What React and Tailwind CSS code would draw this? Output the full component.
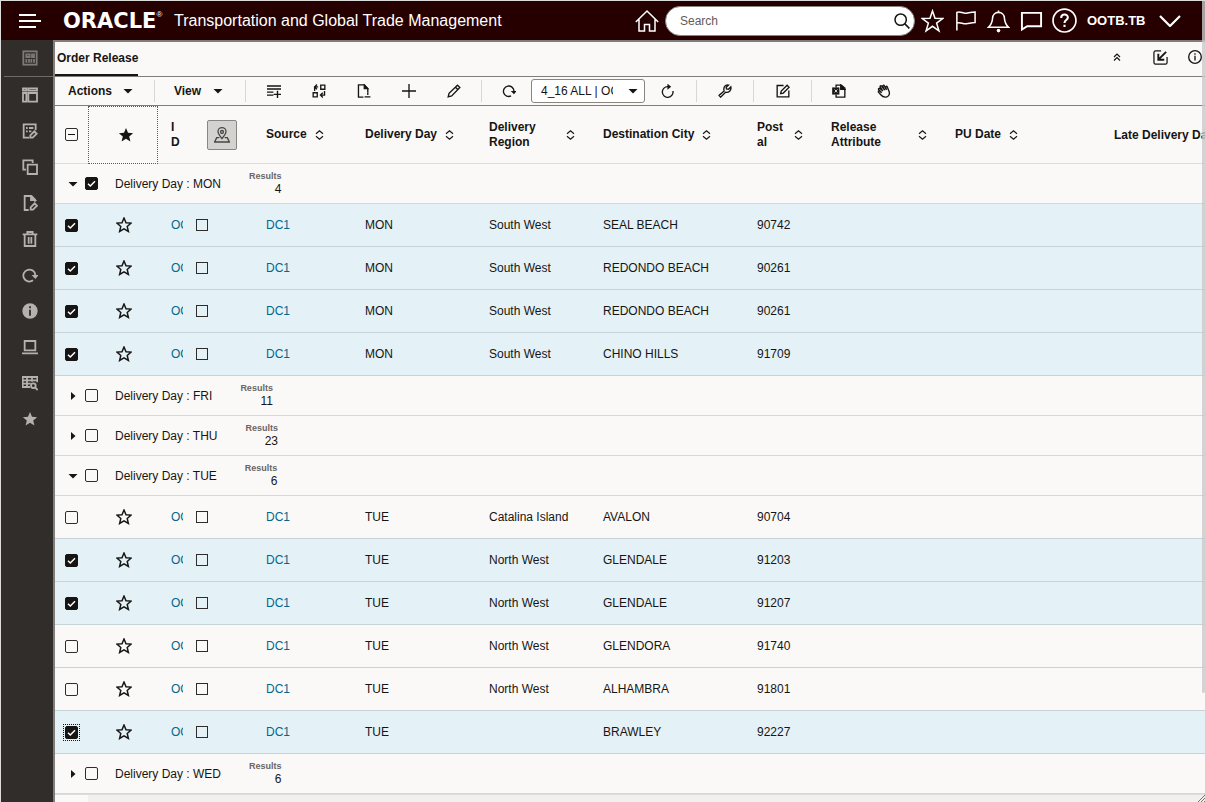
import { useState } from 'react'

const rows = [
  { group: 'MON', count: 4, open: true, checked: true, items: [
    { region: 'South West', city: 'SEAL BEACH', postal: '90742', checked: true },
    { region: 'South West', city: 'REDONDO BEACH', postal: '90261', checked: true },
    { region: 'South West', city: 'REDONDO BEACH', postal: '90261', checked: true },
    { region: 'South West', city: 'CHINO HILLS', postal: '91709', checked: true },
  ] },
  { group: 'FRI', count: 11, open: false, items: [] },
  { group: 'THU', count: 23, open: false, items: [] },
  { group: 'TUE', count: 6, open: true, items: [
    { region: 'Catalina Island', city: 'AVALON', postal: '90704' },
    { region: 'North West', city: 'GLENDALE', postal: '91203', checked: true },
    { region: 'North West', city: 'GLENDALE', postal: '91207', checked: true },
    { region: 'North West', city: 'GLENDORA', postal: '91740' },
    { region: 'North West', city: 'ALHAMBRA', postal: '91801' },
    { region: '', city: 'BRAWLEY', postal: '92227', checked: true, focused: true },
  ] },
  { group: 'WED', count: 6, open: false, items: [] },
]

const STAR = 'M12 1.500l3 7.100 7.700.6-5.900 5 1.800 7.500L12 17.700l-6.600 4 1.800-7.500-5.900-5 7.700-.6z'

function Icon({ className = 'w-4 h-4', sw = 2, fill = 'none', box = '0 0 24 24', children }) {
  return (
    <svg viewBox={box} className={`shrink-0 ${className}`} fill={fill} stroke="currentColor" strokeWidth={sw} aria-hidden="true">
      {children}
    </svg>
  )
}

const Caret = ({ right }) => (
  <svg viewBox="0 0 10 10" className="w-[10px] h-[10px] shrink-0" fill="currentColor" aria-hidden="true">
    <path d={right ? 'M3 1l4.500 4L3 9z' : 'M.5 3h9L5 7.500z'} />
  </svg>
)

const Sort = () => (
  <svg viewBox="0 0 9 10" className="w-[9px] h-[10px] shrink-0" fill="none" stroke="currentColor" strokeWidth="1.200" aria-hidden="true">
    <path d="M1 3.800L4.500.8 8 3.800M1 6.200l3.500 3L8 6.200" />
  </svg>
)

function Check({ label, initial = false, focused, mixed, square }) {
  const [on, setOn] = useState(initial)
  return (
    <span className={`relative flex w-[15px] h-[15px] -m-px p-px shrink-0 ${focused ? 'outline outline-1 outline-dotted outline-[#161513]' : ''}`}>
      <input type="checkbox" aria-label={label} checked={on} onChange={() => setOn(!on)}
        className={`peer appearance-none m-0 border border-[#2f2c2a] checked:bg-[#161513] checked:border-[#161513] ${square ? 'w-3 h-3' : 'w-[13px] h-[13px] rounded-[2px]'}`} />
      <svg viewBox="0 0 13 13" className="absolute left-px top-px w-[13px] h-[13px] hidden peer-checked:block pointer-events-none" fill="none" stroke="#fff" strokeWidth="1.500">
        <path d="M3 6.800l2.300 2.200L10 4.300" />
      </svg>
      {mixed && <span className="absolute left-1 top-[7px] w-[7px] h-px bg-[#161513]" />}
    </span>
  )
}

/* Sidebar */
const sideIcons = [
  { name: 'Workbench', art: <><rect x="2" y="2" width="20" height="20" /><path d="M6.500 6.500h5v4h-5zM15 6.500h3v4h-3zM6.500 13.500V19M10.500 13.500V19M14 13.500V19M18 13.500V19" /></> },
  { name: 'Layout', art: <><path d="M1.500 2h5v3.500h-5zM9.500 2h13v3.500h-13zM1.500 9h5v13h-5zM9.500 9h13v13h-13z" /></> },
  { name: 'Edit list', art: <><path d="M11 22H2.500V2h18v9M6 7.500h2.500M10.500 7.500H17M6 12.500h2.500M10.500 12.500H14" /><path d="M12.500 18.500l6-6 3.500 3.500-6 6h-3.500z" /></> },
  { name: 'Copy', art: <><path d="M6 16H2V2h14v4" /><path d="M8.500 8.500h14v14h-14z" /></> },
  { name: 'Edit document', art: <><path d="M10 22.500H4V1.500h10l5.500 5.500v3" /><path d="M13.500 1.500L19.500 7.500h-6z" fill="currentColor" /><path d="M13 18.500l6-6 3.500 3.500-6 6H13z" /></> },
  { name: 'Delete', art: <><path d="M1 5h22M8 4.500V1.500h8v3M4 5v17.500h16V5M10 9v10M14 9v10" /></> },
  { name: 'Refresh', art: <><path d="M16.500 20a9 9 0 1 1 3.500-8" /><path d="M14.500 12H25l-5 6z" fill="currentColor" stroke="none" /></> },
  { name: 'Information', art: <><circle cx="12" cy="12" r="11.500" fill="currentColor" stroke="none" /><path d="M12 10v9M12 5v3" stroke="#312d2a" /></> },
  { name: 'Device', art: <><path d="M4 3h16v14H4zM0 21.500h24" /></> },
  { name: 'Inspect table', art: <><path d="M12 18H1V3h22v8M1 8h22M1 13h12M7.500 4v14M15 4v6" /><circle cx="17" cy="16" r="3.500" /><path d="M19.500 18.500L23.500 22.500" /></> },
  { name: 'Favorites', art: <path d={STAR} fill="currentColor" stroke="none" /> },
]

/* Top bar */
const headIcons = [
  { name: 'Favorites', art: <path d="M12 1.500l2.600 7.700 8.200.2-6.500 4.800 2.400 8L12 17.500l-6.700 4.700 2.400-8L1.200 9.400l8.200-.2z" /> },
  { name: 'Flag', art: <path d="M3 22V3c4-1.500 6 1.500 10 .8 3-.5 5-1.300 9-1.300v11c-4 0-6 1-9 1.300-4 .4-6-1.800-10-.8" /> },
  { name: 'Notifications', art: <><path d="M1.500 18.500c4-3.500 4-6 4.300-9.500C6 5.500 8.500 3 12 3s6 2.500 6.200 6c.3 3.500.3 6 4.300 9.500zM12 1v2" /><circle cx="12" cy="22" r="1.900" fill="currentColor" stroke="none" /></> },
  { name: 'Messages', art: <path d="M2 3.500h20v14H7.500L2 21z" strokeWidth="2" /> },
  { name: 'Help', art: <><circle cx="12" cy="12" r="11" /><path d="M8.800 9.500c0-4.200 6.400-4.200 6.400-.5 0 2.500-3.200 2.500-3.200 5.300M12 16v2.300" strokeWidth="2" /></> },
]

const toolIcons = {
  addRow: <><path d="M0 3.500h24M0 8.500h24M0 14h11M0 19h11M18 11.500V24M11.500 17.800H24" strokeWidth="2.400" /></>,
  swap: <><path d="M15 2h7v7h-7zM2 15h7v7H2zM4.500 12V5h6M8.500 1L4.500 5l4 4M21.500 12v7H15M18.500 15l-4 4 4 4" /></>,
  docMinus: <><path d="M11 22.500H2.500v-21h10l6 6.500v6" /><path d="M12.500 1.500l6 6.500h-6z" fill="currentColor" /><path d="M13 22h10M18.500 14v5" /></>,
  plus: <path d="M12 0v24M0 12h24" />,
  pencil: <><path d="M2 22l1.500-6L18 2l4 4L8 20.500zM14.500 5.500l4 4" /></>,
  redo: <><path d="M15.500 20.500A9 9 0 1 1 20.500 12" /><path d="M15 12h10l-4.500 5.500z" fill="currentColor" stroke="none" /></>,
  reload: <><path d="M20.500 12A9.200 9.200 0 1 1 12 4.500" /><path d="M11-.5L17.500 4.500 11 10z" fill="currentColor" stroke="none" /></>,
  wrench: <><path d="M10.500 12L1.800 19.500l2.700 3L13 14c5 1.500 10.500-3 9-9l-4 4-3.500-.5L14 5.500l4-3.700C12.500.5 8.500 6 10.500 12z" /></>,
  compose: <><path d="M13 2.500H2v19.500h20V11" /><path d="M8 16.500l1-4.500L19 2l3.500 3.500-10 10z" /></>,
  excel: <><path d="M7 6V2h9l6 5v15.500H7V18" /><path d="M15 2l7 7h-7z" fill="currentColor" /><rect x="1.500" y="7" width="10" height="10" fill="currentColor" /><path d="M4.500 9.500l4.500 5M9 9.500l-4.500 5" stroke="#fbf9f8" strokeWidth="1.500" /></>,
  hand: <><path d="M8 15L2.800 9.500c-1-1.500 1-3 2.200-1.800L10 12 5.500 5C4.700 3.300 7 2.200 8 3.700l5 6.800-3-6.500c-.6-1.900 1.800-2.600 2.600-1l3.600 7-1.200-4.500c-.3-1.800 1.800-2.200 2.500-.6l3.500 8.600c1 4-1 8.500-5.500 9-4 .5-7-1.500-9-4l-4-4.500c-.8-1.500.8-2.800 2.200-1.800z" /></>,
}

function Tool({ name, art, className = 'w-[45px]', icon = 'w-[14px] h-[14px]' }) {
  return (
    <button aria-label={name} className={`${className} h-7 shrink-0 flex items-center justify-center`}>
      <Icon className={icon} sw={2.300}>{toolIcons[art]}</Icon>
    </button>
  )
}

const Divider = () => <div className="w-px h-[22px] shrink-0 bg-[#d9d7d5]" />

function TopBar() {
  return (
    <header className="h-[39px] flex items-center bg-[#260000] text-white pl-[18px] pr-6">
      <button aria-label="Menu" className="w-[22px] shrink-0">
        <Icon className="w-[22px] h-4" box="0 0 22 16" sw={2}><path d="M0 2h17M0 8h22M0 14h17" /></Icon>
      </button>
      <div className="ml-[22px] w-[103px] shrink-0 flex items-start leading-none">
        <span className="font-['DejaVu_Sans'] font-bold text-[21px] leading-6">ORACLE</span>
        <span className="text-[8px] leading-[12px]">®</span>
      </div>
      <h1 className="ml-2 text-[16px] whitespace-nowrap">Transportation and Global Trade Management</h1>

      <div className="ml-auto flex items-center">
        <button aria-label="Home" className="w-8 mr-[2px] flex justify-center">
          <Icon className="w-6 h-6" sw={1.500}><path d="M.8 13L12 2l11.200 11M4 10.500V22h5.500v-6.500h5V22H20V10.500" /></Icon>
        </button>
        <div className="w-[250px] h-[30px] flex items-center bg-white rounded-full border border-[#8b8580] pl-[14px] pr-1">
          <input type="text" aria-label="Search" placeholder="Search"
            className="flex-1 min-w-0 text-[12px] text-[#161513] placeholder:text-[#5f5b58] outline-none" />
          <button aria-label="Run search" className="text-[#161513]">
            <Icon className="w-4 h-4" sw={2.300}><circle cx="10" cy="10" r="8.500" /><path d="M16 16l7 7" /></Icon>
          </button>
        </div>
        <div className="flex items-center ml-px">
          {headIcons.map((i) => (
            <button key={i.name} aria-label={i.name} className="w-[33px] flex justify-center">
              <Icon className={i.name === 'Help' ? 'w-[25px] h-[25px]' : 'w-[23px] h-6'} sw={1.600}>{i.art}</Icon>
            </button>
          ))}
        </div>
        <button className="ml-[6px] flex items-center gap-2 text-[13px] font-bold">
          <span className="w-16 text-left">OOTB.TB</span>
          <Icon className="w-[22px] h-3" box="0 0 22 12" sw={2.200}><path d="M1 1l10 10L21 1" /></Icon>
        </button>
      </div>
    </header>
  )
}

function Sidebar() {
  return (
    <nav className="w-[52px] shrink-0 bg-[#312d2a] text-[#b5b1ae] pl-[3px]">
      {sideIcons.map((i, n) => (
        <button key={i.name} aria-label={i.name}
          className={`w-full flex items-center justify-center pl-[3px] ${n === 0 ? 'h-[37px] border-b border-[#6f6b68] text-[#7d7976]' : 'h-9'}`}>
          <Icon className="w-4 h-4" sw={2.700}>{i.art}</Icon>
        </button>
      ))}
    </nav>
  )
}

function Toolbar() {
  return (
    <div className="h-[29px] flex items-center border-b border-[#807d7a]">
      <button className="w-[99px] shrink-0 pl-[13px] flex items-center gap-[11px] text-[12px] font-bold">Actions <Caret /></button>
      <Divider />
      <button className="w-[90px] shrink-0 pl-[19px] flex items-center gap-3 text-[12px] font-bold">View <Caret /></button>
      <Divider />
      <div className="flex px-[5px] shrink-0">
        <Tool name="Add row" art="addRow" />
        <Tool name="Swap" art="swap" />
        <Tool name="Remove document" art="docMinus" />
        <Tool name="New" art="plus" />
        <Tool name="Edit" art="pencil" />
      </div>
      <Divider />
      <div className="flex items-center pl-1 pr-[6px] shrink-0">
        <Tool name="Redo" art="redo" />
        <div className="relative w-[114px]">
          <select aria-label="Saved layout" className="appearance-none w-full h-6 pl-[9px] pr-[31px] bg-white border border-[#8b8580] rounded-[3px] text-[12px]">
            <option>4_16 ALL | OOTB</option>
          </select>
          <span className="absolute right-[7px] top-[7px] pointer-events-none"><Caret /></span>
        </div>
        <Tool name="Reload" art="reload" />
      </div>
      <Divider />
      <Tool name="Settings" art="wrench" className="w-14" />
      <Divider />
      <Tool name="Mass update" art="compose" className="w-[57px]" />
      <Divider />
      <Tool name="Export to Excel" art="excel" className="w-[54px]" />
      <Tool name="Drag" art="hand" className="w-9" />
    </div>
  )
}

function Heading({ label }) {
  return (
    <th className="pl-3 pr-4 border-b border-[#dedcda] text-left font-bold leading-[15px]">
      <div className="flex items-center gap-2">
        <span className="min-w-0 wrap-break-word">{label}</span>
        <Sort />
      </div>
    </th>
  )
}

function OrderRow({ day, item }) {
  const cell = 'pl-3 border-b border-[#c8d3d8] whitespace-nowrap'
  return (
    <tr className={`h-[43px] ${item.checked ? 'bg-[#e4f1f7]' : ''}`}>
      <td className="pl-[10px] border-b border-[#c8d3d8]"><Check label={`Select ${item.city}`} initial={item.checked} focused={item.focused} /></td>
      <td className="pl-[28px] border-b border-[#c8d3d8]">
        <button aria-label="Add favorite" className="block">
          <Icon className="w-4 h-4" sw={2.200}><path d={STAR} /></Icon>
        </button>
      </td>
      <td className="pl-[13px] border-b border-[#c8d3d8] overflow-hidden"><a href="#" className="block w-3 overflow-hidden text-[#00688c]">OOTB</a></td>
      <td className={cell}><Check label={`Map ${item.city}`} square /></td>
      <td className={cell}><a href="#" className="text-[#00688c]">DC1</a></td>
      <td className={cell}>{day}</td>
      <td className={cell}>{item.region}</td>
      <td className={cell}>{item.city}</td>
      <td className={cell}>{item.postal}</td>
      <td className={cell} colSpan={3}></td>
    </tr>
  )
}

function Group({ data }) {
  const [open, setOpen] = useState(data.open)
  return (
    <tbody>
      <tr className="h-10">
        <td colSpan={12} className="border-b border-[#d5d7d8]">
          <div className="flex items-center pl-[13px]">
            <button aria-label={`Toggle ${data.group}`} onClick={() => setOpen(!open)} className="mr-[7px]"><Caret right={!open} /></button>
            <Check label={`Select day ${data.group}`} initial={data.checked} />
            <span className="ml-[17px]">Delivery Day : {data.group}</span>
            <div className="ml-7 text-right">
              <div className="text-[9px] leading-[12px] font-bold text-[#6a6663]">Results</div>
              <div className="leading-[15px]">{data.count}</div>
            </div>
          </div>
        </td>
      </tr>
      {open && data.items.map((item, i) => <OrderRow key={i} day={data.group} item={item} />)}
    </tbody>
  )
}

export default function App() {
  return (
    <div className="min-h-screen relative flex flex-col overflow-hidden border-t border-l border-[#dcdcdc] bg-[#fbf9f8] text-[12px] text-[#161513] font-['Liberation_Sans',sans-serif]">
      <TopBar />
      <div className="flex flex-1 min-w-0">
        <Sidebar />
        <main className="flex-1 min-w-0 flex flex-col overflow-hidden border-t-2 border-l-2 border-[#807d7a]">
          <div className="h-[35px] flex items-stretch justify-between border-b border-[#807d7a]">
            <button className="pl-[2px] border-b-2 border-[#161513] font-bold">Order Release</button>
            <div className="flex items-center pb-1">
              <button aria-label="Collapse" className="mr-8">
                <Icon className="w-2 h-2" box="0 0 8 8" sw={1.200}><path d="M1 4l3-3 3 3M1 7.500l3-3 3 3" /></Icon>
              </button>
              <button aria-label="Detach" className="mr-5">
                <Icon className="w-[15px] h-[15px]" sw={2}>
                  <path d="M13 1.500H4a2.500 2.500 0 0 0-2.500 2.500v16A2.500 2.500 0 0 0 4 22.500h16a2.500 2.500 0 0 0 2.500-2.500v-9" />
                  <path d="M21 3L9 15M8.500 6v9.500H18" strokeWidth="3" />
                </Icon>
              </button>
              <button aria-label="Info" className="mr-[3px]">
                <Icon className="w-[14px] h-[14px]" sw={2.300}><circle cx="12" cy="12" r="10.800" /><path d="M12 10v8M12 5.500v2.500" /></Icon>
              </button>
            </div>
          </div>

          <Toolbar />

          <table className="w-full table-fixed border-separate border-spacing-0">
            <colgroup>
              <col className="w-[33px]" />
              <col className="w-[70px]" />
              <col className="w-[26px]" />
              <col className="w-[70px]" />
              <col className="w-[99px]" />
              <col className="w-[124px]" />
              <col className="w-[114px]" />
              <col className="w-[154px]" />
              <col className="w-[74px]" />
              <col className="w-[124px]" />
              <col className="w-[160px]" />
              <col />
            </colgroup>
            <thead>
              <tr className="h-[58px]">
                <th className="pl-[10px] border-b border-[#dedcda]"><Check label="Select all" mixed /></th>
                <th className="pl-[6px] border border-dotted border-[#5f5b58]">
                  <Icon className="w-4 h-4 mx-auto" sw={0} fill="currentColor"><path d={STAR} /></Icon>
                </th>
                <th className="pl-[13px] border-b border-[#dedcda] text-left leading-[15px]"><span className="block w-[9px] break-all">ID</span></th>
                <th className="pl-[23px] border-b border-[#dedcda]">
                  <button aria-label="Show on map" className="w-[30px] h-[30px] flex items-center justify-center rounded-[2px] border border-[#8b8580] bg-[#d4d2d0] text-[#4a4643]">
                    <Icon className="w-4 h-4" sw={2}>
                      <path d="M12 17.500C8 12 6 10 6 7a6 6 0 0 1 12 0c0 3-2 5-6 10.500z" />
                      <circle cx="12" cy="7.500" r="2.200" />
                      <path d="M8 16H4l-3 6.500h22L20 16h-4" />
                    </Icon>
                  </button>
                </th>
                <Heading label="Source" />
                <Heading label="Delivery Day" />
                <Heading label="Delivery Region" />
                <Heading label="Destination City" />
                <Heading label="Postal" />
                <Heading label="Release Attribute" />
                <Heading label="PU Date" />
                <th className="pl-[11px] border-b border-[#dedcda] text-left whitespace-nowrap overflow-hidden">Late Delivery Date</th>
              </tr>
            </thead>
            {rows.map((r) => <Group key={r.group} data={r} />)}
          </table>

          <div className="flex-1 min-h-2 border-t border-[#dedcda] bg-[#f0f0f0] flex justify-between">
            <div className="w-[33px] bg-[#fbf9f8]" />
            <svg viewBox="0 0 8 8" className="w-2 h-2" stroke="#77736f" strokeWidth="1" aria-hidden="true">
              <path d="M0 8L8 0M3 8l5-5M6 8l2-2" />
            </svg>
          </div>
        </main>
      </div>
      {/* Scroll thumb */}
      <div className="absolute right-0 top-0 w-[3px] h-[692px] rounded-b bg-[#c9c9c9]/80" />
    </div>
  )
}
